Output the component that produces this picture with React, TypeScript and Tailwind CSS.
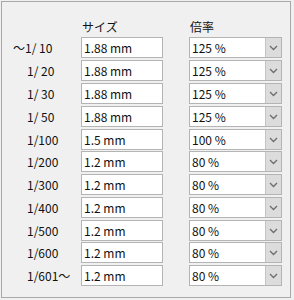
import React from "react";

const rows: { label: string; size: string; rate: string; gap: string; shift?: boolean }[] = [
  { label: "～1/ 10", size: "1.88 mm", rate: "125 %", gap: "mt-0", shift: true },
  { label: "1/ 20", size: "1.88 mm", rate: "125 %", gap: "mt-[2px]" },
  { label: "1/ 30", size: "1.88 mm", rate: "125 %", gap: "mt-[2px]" },
  { label: "1/ 50", size: "1.88 mm", rate: "125 %", gap: "mt-[2px]" },
  { label: "1/100", size: "1.5 mm", rate: "100 %", gap: "mt-[2px]" },
  { label: "1/200", size: "1.2 mm", rate: "80 %", gap: "mt-[1px]" },
  { label: "1/300", size: "1.2 mm", rate: "80 %", gap: "mt-[2px]" },
  { label: "1/400", size: "1.2 mm", rate: "80 %", gap: "mt-[2px]" },
  { label: "1/500", size: "1.2 mm", rate: "80 %", gap: "mt-[2px]" },
  { label: "1/600", size: "1.2 mm", rate: "80 %", gap: "mt-[1px]" },
  { label: "1/601～", size: "1.2 mm", rate: "80 %", gap: "mt-[2px]" },
];

function Chevron() {
  return (
    <svg width="9" height="6" viewBox="0 0 9 6">
      <polyline points="1,1 4.5,4.5 8,1" fill="none" stroke="#6d6d6d" strokeWidth="1.3" />
    </svg>
  );
}

export default function App() {
  return (
    <div
      className="w-[294px] h-[300px] bg-[#f0f0f0] pt-[1px] pl-[1px] text-[12px] text-[#111]"
      style={{ fontFamily: '"Noto Sans CJK JP", "Noto Sans", sans-serif' }}
    >
      <div className="w-[290px] h-[297px] border border-[#a8a8a8] pt-[17px]">
        <div className="flex h-[16px] leading-[16px]">
          <div className="w-[80px]" />
          <div className="w-[82px]">サイズ</div>
          <div className="ml-[26px]">倍率</div>
        </div>
        <div className="mt-[2px] flex flex-col">
          {rows.map((r) => (
            <div key={r.label} className={`flex items-center h-[21px] ${r.gap}`}>
              <div className="w-[79px] pl-[25px] leading-[21px]">
                <span className={r.shift ? "ml-[-14px]" : ""}>{r.label}</span>
              </div>
              <div className="w-[82px] h-[21px] bg-white border border-[#b4b4b4] pl-[2px] leading-[19px]">
                {r.size}
              </div>
              <div className="ml-[26px] w-[93px] h-[21px] flex border border-[#b4b4b4] bg-white">
                <div className="flex-1 pl-[2px] leading-[19px]">{r.rate}</div>
                <div className="w-[16px] h-full bg-[#dcdcdc] border-l border-[#c4c4c4] flex items-center justify-center">
                  <Chevron />
                </div>
              </div>
            </div>
          ))}
        </div>
      </div>
    </div>
  );
}
